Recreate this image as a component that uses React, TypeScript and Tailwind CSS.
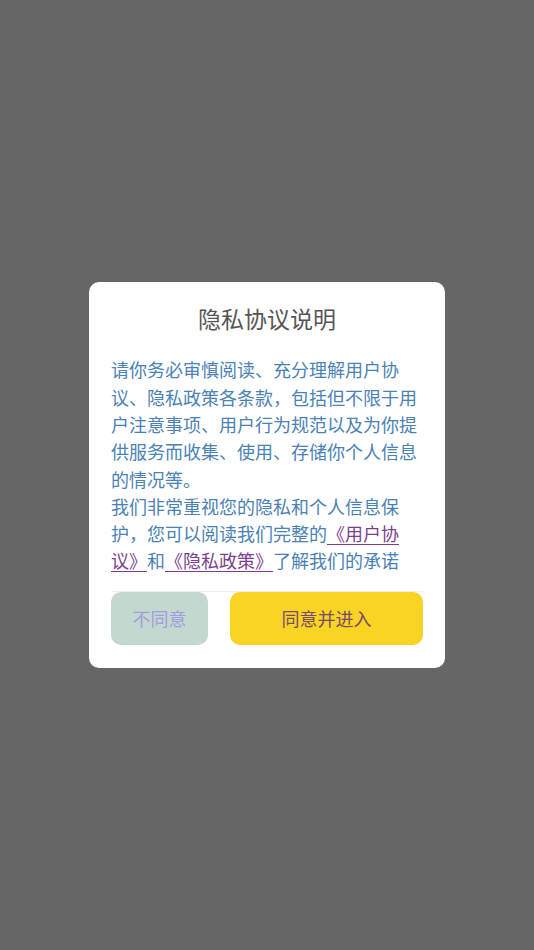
const App = () => {
    return (
        <div className="h-[950px] w-full bg-[#666666] flex items-center justify-center" style={{ fontFamily: '"Noto Sans CJK SC", "Noto Sans", sans-serif' }}>
            <div className="w-[356px] bg-white rounded-[10px] px-[22px] pt-[21px] pb-[23px]">
                <h1 className="text-center text-[23px] leading-[30px] text-[#555555] font-normal">隐私协议说明</h1>
                <div className="mt-[23px] text-[18px] leading-[27.3px] text-[#4b82b5]">
                    <p>请你务必审慎阅读、充分理解用户协议、隐私政策各条款，包括但不限于用户注意事项、用户行为规范以及为你提供服务而收集、使用、存储你个人信息的情况等。</p>
                    <p>
                        我们非常重视您的隐私和个人信息保护，您可以阅读我们完整的<span className="text-[#7d3f8c] underline underline-offset-[3px]">《用户协议》</span>和<span className="text-[#7d3f8c] underline underline-offset-[3px]">《隐私政策》</span>了解我们的承诺
                    </p>
                </div>
                <div className="mt-4 border-t border-[#f0f0f0] flex gap-[22px]">
                    <button className="w-[97px] h-[53px] rounded-[10px] bg-[#c3d8cf] text-[#a29de0] text-[18px]">不同意</button>
                    <button className="flex-1 h-[53px] rounded-[10px] bg-[#f9d423] text-[#7b4a6a] text-[18px]">同意并进入</button>
                </div>
            </div>
        </div>
    );
};

export default App;
